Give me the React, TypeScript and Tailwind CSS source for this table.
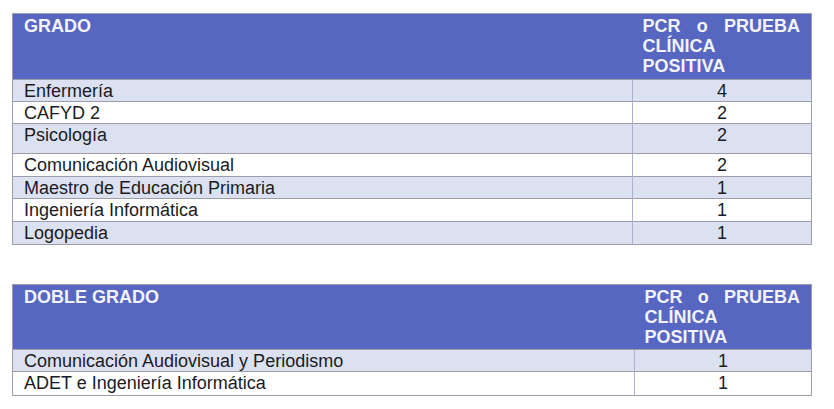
const grados = [
  { name: "Enfermería", n: 4, h: "h-[22px]" },
  { name: "CAFYD 2", n: 2, h: "h-[22px]" },
  { name: "Psicología", n: 2, h: "h-[30px]" },
  { name: "Comunicación Audiovisual", n: 2, h: "h-[23px]" },
  { name: "Maestro de Educación Primaria", n: 1, h: "h-[22px]" },
  { name: "Ingeniería Informática", n: 1, h: "h-[23px]" },
  { name: "Logopedia", n: 1, h: "h-[23px]" },
];

const dobles = [
  { name: "Comunicación Audiovisual y Periodismo", n: 1, h: "h-[22px]" },
  { name: "ADET e Ingeniería Informática", n: 1, h: "h-[24px]" },
];

type Row = { name: string; n: number; h: string };

const CasesTable = ({
  title,
  rows,
  firstCol,
  headH,
}: {
  title: string;
  rows: Row[];
  firstCol: string;
  headH: string;
}) => (
  <table className="w-[800px] table-fixed border-collapse border border-[#9c9cab] text-[18px] leading-[20px]">
    <colgroup>
      <col className={firstCol} />
      <col />
    </colgroup>
    <thead>
      <tr className={`${headH} bg-[#5766c0] text-[#f2f3fb] font-bold`}>
        <th className="align-top text-left pl-[11px] pt-[2px] font-bold">{title}</th>
        <th className="align-top text-justify pl-[10px] pr-[11px] pt-[2px] font-bold">
          PCR o PRUEBA CLÍNICA POSITIVA
        </th>
      </tr>
    </thead>
    <tbody>
      {rows.map((r, i) => (
        <tr
          key={r.name}
          className={`${r.h} ${i % 2 === 0 ? "bg-[#dce1f1]" : "bg-white"} text-[#1b1b22]`}
        >
          <td className="align-top pl-[11px] pt-[1px] border-t border-[#9c9cab]">{r.name}</td>
          <td className="align-top text-center pt-[1px] border-t border-l border-t-[#9c9cab] border-l-[#a9b0d2]">
            {r.n}
          </td>
        </tr>
      ))}
    </tbody>
  </table>
);

export default function App() {
  return (
    <div
      className="w-[834px] h-[409px] bg-white pl-[12px] pt-[13px] flex flex-col gap-[39px]"
      style={{ fontFamily: '"Liberation Sans", Arial, sans-serif' }}
    >
      <CasesTable title="GRADO" rows={grados} firstCol="w-[620px]" headH="h-[66px]" />
      <CasesTable title="DOBLE GRADO" rows={dobles} firstCol="w-[622px]" headH="h-[65px]" />
    </div>
  );
}
